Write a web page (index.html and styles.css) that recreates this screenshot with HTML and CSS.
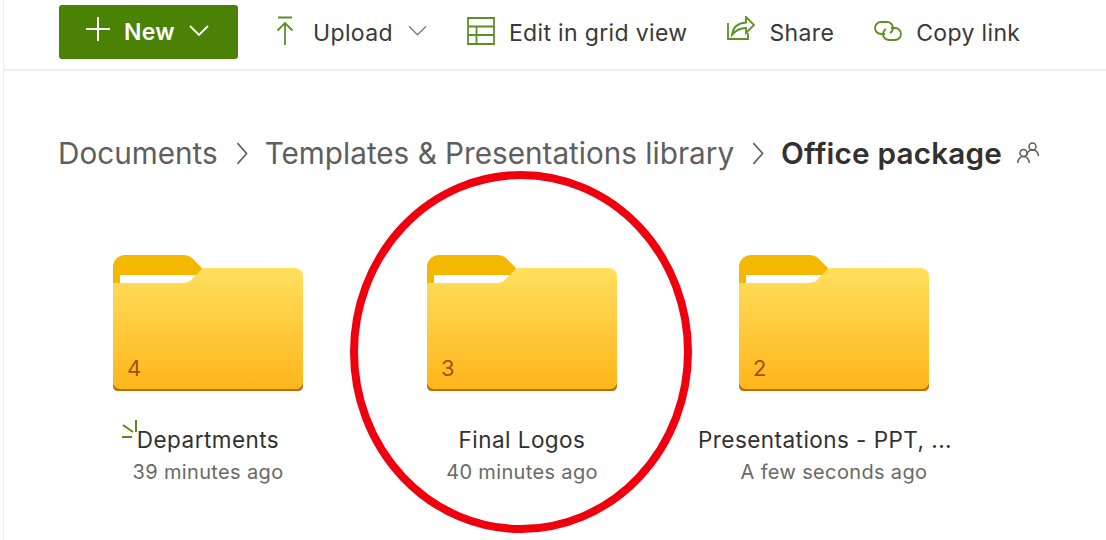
FILE: index.html
```html
<!DOCTYPE html>
<html lang="en">
<head>
<meta charset="utf-8">
<title>Office package</title>
<link rel="stylesheet" href="styles.css">
</head>
<body>
<svg class="defs" width="0" height="0" aria-hidden="true">
  <defs>
    <linearGradient id="fg" x1="0" y1="0" x2="0" y2="1">
      <stop offset="0" stop-color="#ffdf5e"/>
      <stop offset="1" stop-color="#ffb51a"/>
    </linearGradient>
    <symbol id="folder" viewBox="0 0 190 136">
      <path d="M0 12a12 12 0 0 1 12-12h58a14 14 0 0 1 9 3l10 10v4H0z" fill="#f4b800"/>
      <path d="M0 12h88v16H0z" fill="#f4b800"/>
      <rect x="7" y="20" width="80" height="10" fill="#fff"/>
      <path d="M0 28h69c4 0 7-1 10-4l10-10c1-1 2-1 3-1h90a8 8 0 0 1 8 8v107a8 8 0 0 1-8 8H8a8 8 0 0 1-8-8z" fill="url(#fg)"/>
      <path d="M0 131.500v-3.500a8 8 0 0 0 8 6h174a8 8 0 0 0 8-6v3.500a5 5 0 0 1-5 4.500H5a5 5 0 0 1-5-4.500z" fill="#b86f0a"/>
    </symbol>
  </defs>
</svg>
<div class="page">
  <header class="toolbar">
    <button class="new-btn">
      <svg class="new-plus" viewBox="0 0 24 24"><path d="M12 0v24M0 12h24"/></svg>
      <span>New</span>
      <svg class="new-chev" viewBox="0 0 20 12"><path d="M1 1l9 9 9-9"/></svg>
    </button>
    <div class="cmd cmd-upload">
      <svg class="ico" width="22" height="30" viewBox="0 0 22 30"><path d="M4 1.500h14M11 29V7M3.500 14.500L11 7l7.500 7.500"/></svg>
      <span>Upload</span>
      <svg class="chev" viewBox="0 0 20 11"><path d="M1 1l9 9 9-9"/></svg>
    </div>
    <div class="cmd cmd-grid">
      <svg class="ico" width="28" height="28" viewBox="0 0 28 28"><path d="M1 1h26v26H1zM1 9.500h26M1 18h26M9.500 9.500V27"/></svg>
      <span>Edit in grid view</span>
    </div>
    <div class="cmd cmd-share">
      <svg class="ico" width="28" height="26" viewBox="0 0 28 26"><path d="M1 7v16h20v-6M5 19C6 11 11 7 19 6.500V1l8 8-8 8v-5c-6 0-10 2-14 7z"/></svg>
      <span>Share</span>
    </div>
    <div class="cmd cmd-link">
      <svg class="ico" width="28" height="20" viewBox="0 0 28 20"><path d="M11 13H7A6 6 0 0 1 7 1h6a6 6 0 0 1 6 6 6 6 0 0 1-3 5M17 7h4a6 6 0 0 1 0 12h-6a6 6 0 0 1-6-6 6 6 0 0 1 3-5"/></svg>
      <span>Copy link</span>
    </div>
  </header>

  <nav class="crumbs">
    <span class="crumb">Documents</span>
    <svg class="sep" viewBox="0 0 10 20"><path d="M1 1l8 9-8 9"/></svg>
    <span class="crumb">Templates &amp; Presentations library</span>
    <svg class="sep" viewBox="0 0 10 20"><path d="M1 1l8 9-8 9"/></svg>
    <strong class="crumb-current">Office package</strong>
    <svg class="people" viewBox="0 0 22 24"><circle cx="15.500" cy="5.500" r="3.500"/><path d="M9.500 15c.5-4 2.500-6 6-6s5.500 2 6 6"/><circle cx="6.500" cy="12" r="3.500"/><path d="M.7 22c.5-4 2.500-6.500 5.800-6.500s5.300 2.500 5.800 6.500"/></svg>
  </nav>

  <section class="tiles">
    <article class="tile">
      <div class="folder"><svg viewBox="0 0 190 136"><use href="#folder"/></svg><span class="count">4</span></div>
      <div class="name">
        <svg class="sync" viewBox="0 0 16 20"><path d="M14 2v12M1 7l10 7M0 19h10"/></svg>
        Departments
      </div>
      <div class="when">39 minutes ago</div>
    </article>
    <article class="tile">
      <div class="folder"><svg viewBox="0 0 190 136"><use href="#folder"/></svg><span class="count">3</span></div>
      <div class="name">Final Logos</div>
      <div class="when">40 minutes ago</div>
    </article>
    <article class="tile">
      <div class="folder"><svg viewBox="0 0 190 136"><use href="#folder"/></svg><span class="count">2</span></div>
      <div class="name name-clip">Presentations - PPT, ...</div>
      <div class="when">A few seconds ago</div>
    </article>
  </section>
</div>
<svg class="ring" viewBox="0 0 342 362"><ellipse cx="171" cy="181" rx="167" ry="177"/></svg>
</body>
</html>
```

FILE: styles.css
```css
* { box-sizing: border-box; }
html, body { margin: 0; height: 100%; overflow: hidden; background: #fff; }
body { font-family: Inter, "Liberation Sans", sans-serif; color: #323130; position: relative; }
.defs { position: absolute; }
.page { height: 540px; margin-left: 3px; border-left: 1px solid #efefef; }

.toolbar { height: 71px; padding: 5px 0 0 55px; display: flex; align-items: flex-start; border-bottom: 2px solid #eeeeee; }
.new-btn { width: 179px; height: 54px; background: #498205; border: 0; border-radius: 3px; color: #fff; display: flex; align-items: center; padding: 0 0 1px 27px; font: 600 23px Inter, sans-serif; letter-spacing: .3px; }
.new-plus { width: 24px; height: 24px; margin: -6px 14px 0 0; fill: none; stroke: #fff; stroke-width: 2; }
.new-chev { width: 20px; height: 12px; margin: -2px 0 0 14px; fill: none; stroke: #fff; stroke-width: 1.800; }

.cmd { height: 54px; display: flex; align-items: center; font-size: 23px; color: #3a3937; letter-spacing: .35px; }
.cmd span { padding-top: 2px; }
.ico { fill: none; stroke: #5d8f28; stroke-width: 1.800; margin-top: -3px; flex: none; }
.cmd-upload { margin-left: 36px; }
.cmd-upload span { margin-left: 17px; }
.chev { width: 19px; height: 11px; margin: -4px 0 0 15px; fill: none; stroke: #77767a; stroke-width: 1.300; }
.cmd-grid { margin-left: 40px; }
.cmd-grid span { margin-left: 14px; }
.cmd-share { margin-left: 39px; }
.cmd-share .ico { margin-top: -6px; }
.cmd-share span { margin-left: 15px; }
.cmd-link { margin-left: 40px; }
.cmd-link span { margin-left: 14px; }

.crumbs { height: 40px; margin: 62px 0 0 54px; display: flex; align-items: center; font-size: 29.700px; color: #605e5c; white-space: nowrap; }
.sep { width: 12px; height: 23px; margin: 0 17px 0 18px; fill: none; stroke: #605e5c; stroke-width: 1.400; }
.crumb-current { font-weight: 600; color: #323130; letter-spacing: .2px; }
.people { width: 22px; height: 24px; margin-left: 15px; fill: none; stroke: #605e5c; stroke-width: 1.500; }

.tiles { margin: 82px 0 0 109px; display: grid; grid-template-columns: 314px 312px 190px; }
.tile { width: 190px; display: flex; flex-direction: column; align-items: center; white-space: nowrap; }
.folder { width: 190px; height: 136px; position: relative; }
.folder svg { display: block; width: 190px; height: 136px; }
.count { position: absolute; left: 14px; bottom: 10px; font-size: 22px; line-height: 26px; color: #a4510a; }
.name { position: relative; margin-top: 35px; height: 28px; line-height: 28px; font-size: 22.500px; letter-spacing: .45px; color: #323130; }
.name-clip { width: 272px; text-align: left; }
.sync { position: absolute; left: -15px; top: -8px; width: 16px; height: 20px; fill: none; stroke: #5c8a1f; stroke-width: 2; }
.when { margin-top: 6px; font-size: 20px; line-height: 24px; letter-spacing: .35px; color: #6a6866; }

.ring { position: absolute; left: 350px; top: 171px; width: 342px; height: 362px; fill: none; stroke: #f0000f; stroke-width: 8; }
```
